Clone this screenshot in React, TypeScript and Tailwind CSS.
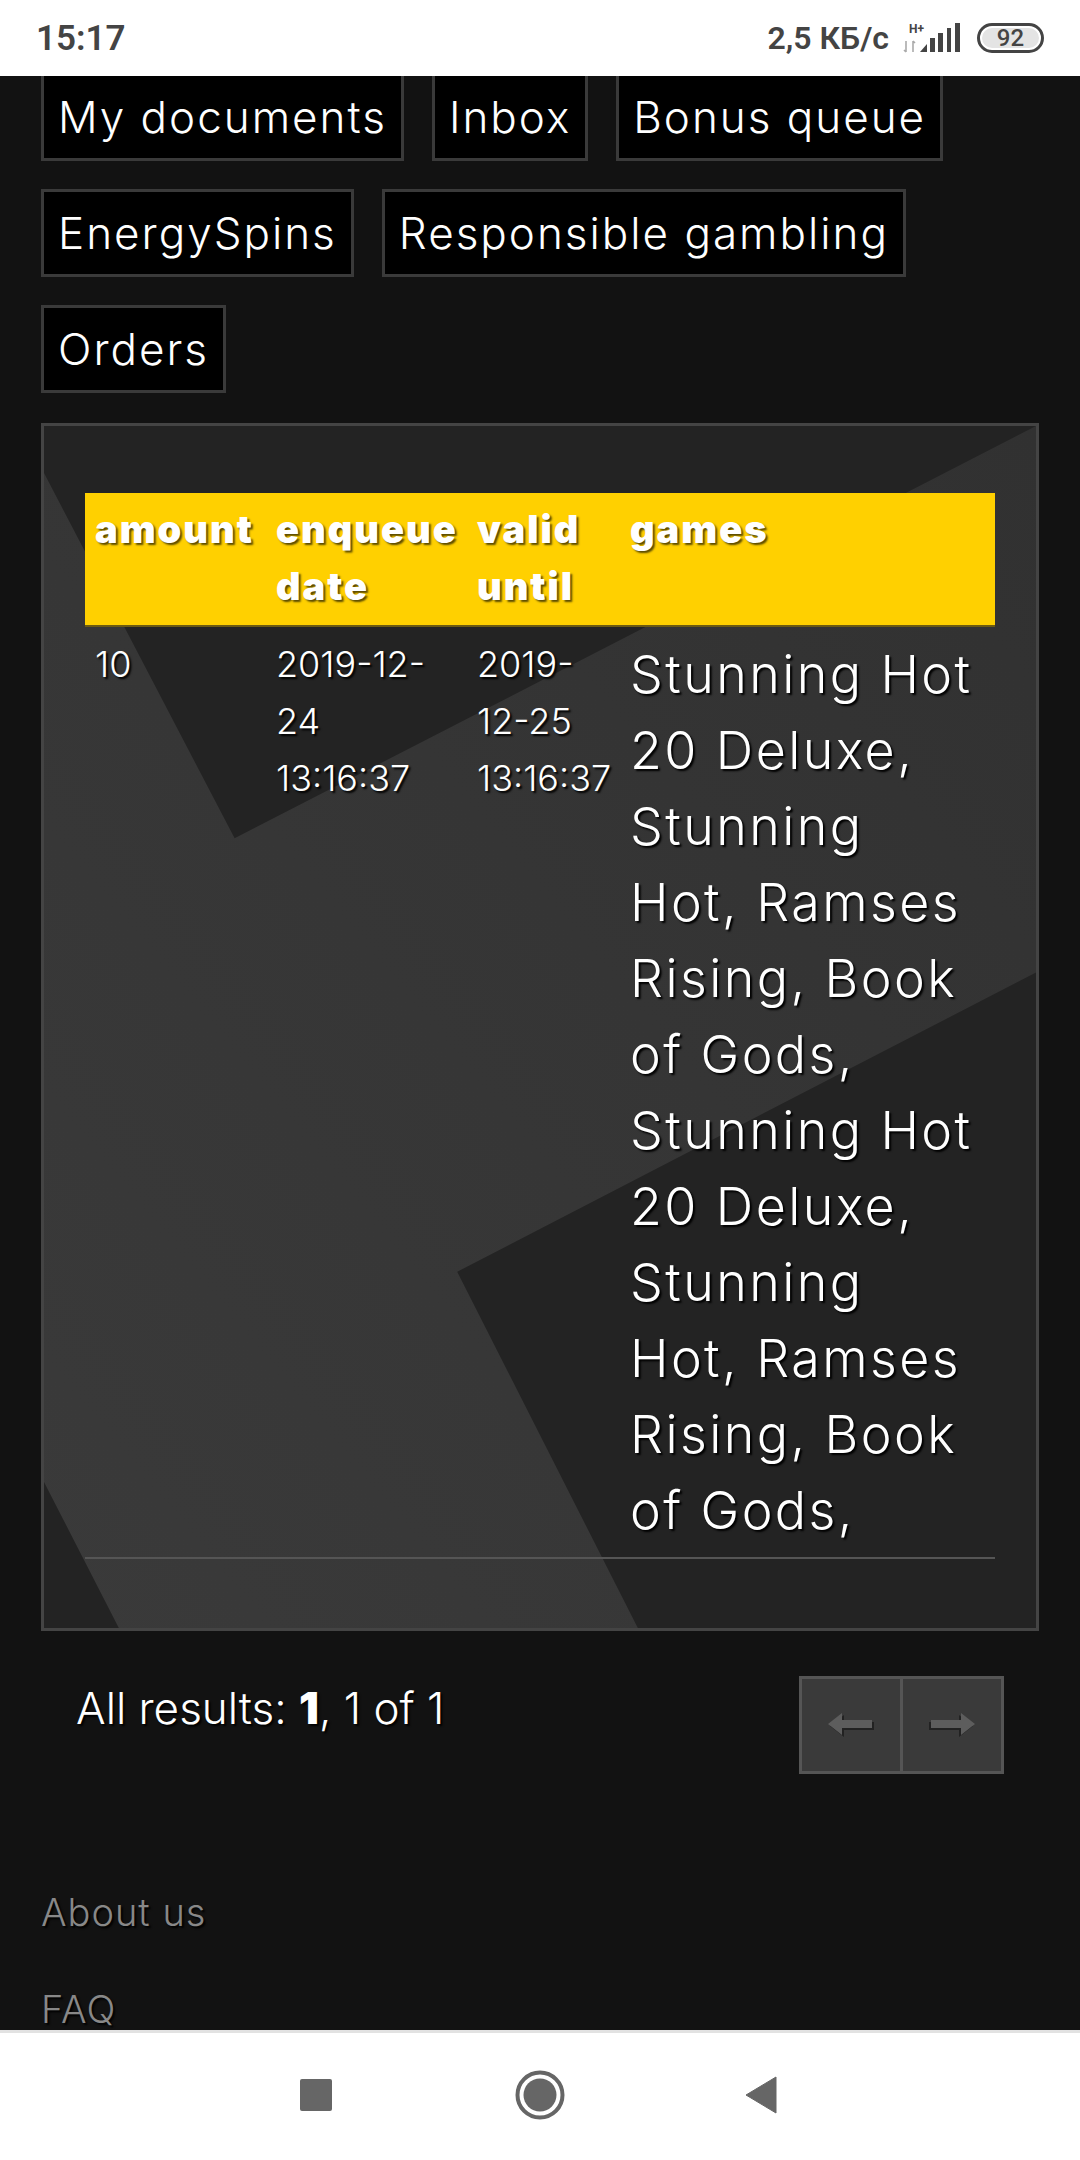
const TABS = ['My documents', 'Inbox', 'Bonus queue', 'EnergySpins', 'Responsible gambling', 'Orders'];
const GAMES = 'Stunning Hot 20 Deluxe, Stunning Hot, Ramses Rising, Book of Gods, Stunning Hot 20 Deluxe, Stunning Hot, Ramses Rising, Book of Gods,';

function StatusBar() {
  return (
    <div className="h-[76px] shrink-0 bg-white flex items-center justify-between pl-[36px] pr-[36px] text-[#444] font-['Roboto',sans-serif] font-semibold">
      <span className="text-[35px] leading-none">15:17</span>
      <div className="flex items-center">
        <span className="text-[32px] leading-none">2,5 КБ/с</span>
        <svg width="60" height="30" viewBox="0 0 60 30" className="ml-[13px]">
          <text x="7" y="10" fontSize="12" fontWeight="700" fill="#444" fontFamily="Roboto, sans-serif">H+</text>
          <path d="M4 18v11M2 27l2 2M11 29V18M11 18l2 2" stroke="#aaa" strokeWidth="1.6" fill="none" />
          <path d="M18 29l7-8v8zM28 15h5v14h-5zM36 10h5v19h-5zM45 5h4v24h-4zM53 0h5v29h-5z" fill="#444" />
        </svg>
        <div className="ml-[15px] w-[67px] h-[30px] rounded-full border-[3px] border-[#444] p-[2px] flex">
          <div className="w-full rounded-full bg-[#e4e4e4] text-[24px] leading-[20px] text-center font-medium">92</div>
        </div>
      </div>
    </div>
  );
}

function NavBar() {
  return (
    <div className="h-[130px] shrink-0 bg-white border-t-[3px] border-[#e2e2e2] flex items-center justify-center pb-[3px] pr-[3px]">
      <div className="w-[32px] h-[32px] rounded-[2px] bg-[#666]" />
      <svg width="50" height="50" viewBox="0 0 50 50" className="ml-[183px]">
        <circle cx="25" cy="25" r="22.5" fill="none" stroke="#666" strokeWidth="4" />
        <circle cx="25" cy="25" r="16.5" fill="#666" />
      </svg>
      <svg width="32" height="38" viewBox="0 0 32 38" className="ml-[180px]">
        <path d="M31 1v36L1 19z" fill="#666" stroke="#666" strokeLinejoin="round" />
      </svg>
    </div>
  );
}

function PanelBackground() {
  return (
    <svg className="absolute inset-0 w-full h-full" viewBox="0 0 994 1201" preserveAspectRatio="none">
      <defs>
        <linearGradient id="band" x1="1" y1="0" x2="0" y2="1">
          <stop offset="0" stopColor="#313131" />
          <stop offset="1" stopColor="#3a3a3a" />
        </linearGradient>
      </defs>
      <rect width="994" height="1201" fill="#232323" />
      <path d="M0 47L191 412 994 0V546L414 845 595 1201H75L0 1055z" fill="url(#band)" />
    </svg>
  );
}

function PageArrow({ flip }: { flip?: boolean }) {
  return (
    <svg width="46" height="24" viewBox="0 0 46 24" className={flip ? '-scale-x-100' : ''}>
      <path d="M2 13l14 11v-7h30V9H16V2z" fill="#222" />
      <path d="M0 11L14 0v7h30v8H14v7z" fill="#5d5d5d" />
    </svg>
  );
}

export default function App() {
  return (
    <div className="w-[1080px] h-[2160px] flex flex-col bg-[#121212] overflow-hidden font-['Inter',sans-serif] text-white">
      <StatusBar />
      <main className="flex-1 min-h-0 overflow-hidden px-[41px] relative">
        {/* top row is scrolled slightly under the status bar */}
        <div className="flex flex-wrap gap-[28px] -mt-[3px]">
          {TABS.map((t) => (
            <div key={t} className="h-[88px] flex items-center px-[14px] pb-[1px] bg-black border-[3px] border-[#3a3a3a] text-[44px] tracking-[2px] font-light whitespace-nowrap">
              {t}
            </div>
          ))}
        </div>

        <section className="relative mt-[30px] border-[3px] border-[#444] pt-[67px] pb-[69px] px-[41px]">
          <PanelBackground />
          <table className="relative w-full table-fixed border-b-2 border-[#555] [text-shadow:2px_2px_2px_#000]">
            <thead>
              <tr className="bg-[#ffd000] border-b-2 border-[#6b5a12] text-left text-[38px] leading-[57px] tracking-[2px] [text-shadow:2px_2px_2px_#5a4a00]">
                <th className="w-[181px] px-[10px] pt-[8px] pb-[10px] align-top font-black">amount</th>
                <th className="w-[201px] px-[10px] pt-[8px] pb-[10px] align-top font-black">enqueue date</th>
                <th className="w-[153px] px-[10px] pt-[8px] pb-[10px] align-top font-black">valid until</th>
                <th className="px-[10px] pt-[8px] pb-[10px] align-top font-black">games</th>
              </tr>
            </thead>
            <tbody>
              <tr className="text-[36px] leading-[57px] font-light align-top">
                <td className="px-[10px] pt-[9px]">10</td>
                <td className="px-[10px] pt-[9px]">2019-12-24 13:16:37</td>
                <td className="px-[10px] pt-[9px]">2019-12-25 13:16:37</td>
                <td className="px-[10px] pt-[10px] pb-[8px] text-[52px] leading-[76px] tracking-[2.4px]">{GAMES}</td>
              </tr>
            </tbody>
          </table>
        </section>

        <div className="flex items-start justify-between pl-[35px] pr-[35px] mt-[45px]">
          <p className="text-[44px] leading-[64px] font-light [text-shadow:2px_2px_2px_#000]">
            All results: <b className="font-black">1</b>, 1 of 1
          </p>
          <div className="flex h-[98px] bg-[#3a3a3a] border-[3px] border-[#555]">
            <div className="w-[101px] flex items-center justify-center border-r-[3px] border-[#555]">
              <PageArrow />
            </div>
            <div className="w-[98px] flex items-center justify-center">
              <PageArrow flip />
            </div>
          </div>
        </div>

        <nav className="mt-[118px] flex flex-col gap-[57px] text-[38px] tracking-[1px] leading-[40px] font-light text-[#888] [text-shadow:2px_2px_2px_#000]">
          <a>About us</a>
          <a>FAQ</a>
        </nav>
      </main>
      <NavBar />
    </div>
  );
}
